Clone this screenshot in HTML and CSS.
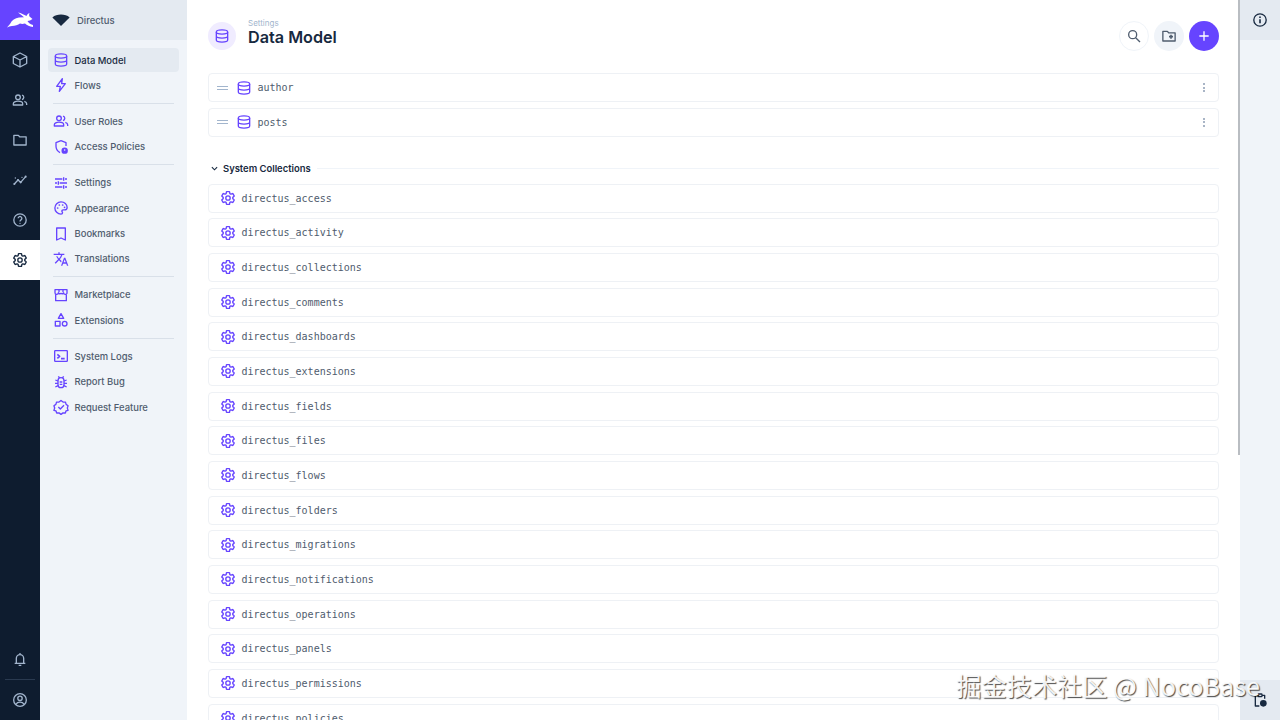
FILE: index.html
```html
<!DOCTYPE html>
<html lang="en">
<head>
    <meta charset="UTF-8">
    <title>Data Model - Directus</title>
    <link rel="stylesheet" href="styles.css">
</head>
<body>
<svg class="sprite" width="0" height="0">
    <symbol id="i-database" viewBox="0 0 24 24"><ellipse cx="12" cy="6" rx="8.500" ry="3.200"/><path d="M3.500 6v12c0 1.800 3.800 3.200 8.500 3.200s8.500-1.400 8.500-3.200V6M3.500 12c0 1.800 3.800 3.200 8.500 3.200s8.500-1.400 8.500-3.200"/></symbol>
    <symbol id="i-bolt" viewBox="0 0 24 24"><path d="M14 2.500 5.500 14H11l-1.500 7.500L18.500 10H13z"/></symbol>
    <symbol id="i-group" viewBox="0 0 24 24"><circle cx="9" cy="8" r="3.500"/><path d="M2 19.500v-1.800c0-2.200 3.200-3.900 7-3.900s7 1.700 7 3.900v1.800zM15 4.600a3.500 3.500 0 0 1 0 6.800M18.500 14.200c2 .6 3.500 1.800 3.500 3.500v1.800"/></symbol>
    <symbol id="i-policy" viewBox="0 0 24 24"><path d="M12 2.500 19.500 5.500v5M10.500 20.500c-3.200-1.700-6-5-6-9.500V5.500L12 2.500"/><circle class="fill" cx="17.500" cy="17.500" r="4.800"/><circle class="hole" cx="17.500" cy="16.500" r="1.200"/></symbol>
    <symbol id="i-tune" viewBox="0 0 24 24"><path d="M3 6h11M18 6h3M16 3.500v5M3 12h3M10 12h11M8 9.500v5M3 18h11M18 18h3M16 15.500v5"/></symbol>
    <symbol id="i-palette" viewBox="0 0 24 24"><path d="M12 2.800a9.200 9.200 0 0 0 0 18.400c1.500 0 2.300-1 2.300-2 0-1.500-1.100-1.600-1.100-2.700 0-1 .8-1.600 2-1.600h2.300a3.700 3.700 0 0 0 3.700-3.700c0-4.900-4.100-8.400-9.200-8.400z"/><circle class="fill" cx="7" cy="12" r="1.300"/><circle class="fill" cx="9.500" cy="7.500" r="1.300"/><circle class="fill" cx="14.500" cy="7.500" r="1.300"/><circle class="fill" cx="17.300" cy="11" r="1.300"/></symbol>
    <symbol id="i-bookmark" viewBox="0 0 24 24"><path d="M5.500 3h13v18L12 18l-6.500 3z"/></symbol>
    <symbol id="i-translate" viewBox="0 0 24 24"><path class="fill" d="M12.870 15.070l-2.540-2.510.03-.03c1.740-1.940 2.980-4.170 3.710-6.530H17V4h-7V2H8v2H1v1.990h11.170C11.500 7.920 10.440 9.750 9 11.350 8.070 10.320 7.300 9.190 6.690 8h-2c.73 1.630 1.730 3.170 2.980 4.560l-5.090 5.020L4 19l5-5 3.110 3.110.76-2.040zM18.500 10h-2L12 22h2l1.120-3h4.750L21 22h2l-4.500-12zm-2.620 7l1.620-4.330L19.120 17h-3.240z"/></symbol>
    <symbol id="i-store" viewBox="0 0 24 24"><path d="M3 4h18v4.500a2.500 2.500 0 0 1-5 .2 2.500 2.500 0 0 1-4 .8 2.500 2.500 0 0 1-4-.8 2.500 2.500 0 0 1-5-.2zM4 11.500V20.500h16v-9M9 4v4M15 4v4"/></symbol>
    <symbol id="i-category" viewBox="0 0 24 24"><path d="M12 2.500 16 9.500H8z"/><rect x="3.500" y="14" width="7" height="7"/><circle cx="17.500" cy="17.500" r="3.500"/></symbol>
    <symbol id="i-terminal" viewBox="0 0 24 24"><rect x="2.500" y="4" width="19" height="16" rx="1"/><path class="bold" d="M6.500 9.500 10 12.500l-3.500 3M12 16h5.500"/></symbol>
    <symbol id="i-bug" viewBox="0 0 24 24"><rect x="7.500" y="5.500" width="9" height="15" rx="4.500"/><path d="M10 12h4M10 15.500h4M8 3.500l2 2.500M16 3.500l-2 2.500M3.500 9l4 1.500M20.500 9l-4 1.500M3 14h4.500M21 14h-4.500M3.500 19.500l4-2M20.500 19.500l-4-2"/></symbol>
    <symbol id="i-verified" viewBox="0 0 24 24"><path d="M12 2.300l3 2.200 3.600.1 1.100 3.500 2.900 2.100-1.100 3.400 1.100 3.500-3 .6-1.100 3.300-3.500-.2-3 2.300-3-2.300-3.500.2-1.100-3.300-3-.6 1.100-3.500-1.100-3.400 2.900-2.100 1.100-3.500 3.600-.1z"/><path d="M8 12l3 3 5.500-5.500"/></symbol>
    <symbol id="i-cube" viewBox="0 0 24 24"><path d="M12 1.500 22 6.800v10.400L12 22.500 2 17.200V6.800zM2 6.800 12 12l10-5.200M12 12v10.500"/></symbol>
    <symbol id="i-folder" viewBox="0 0 24 24"><path d="M2.800 5h6.700l2 2.200h9.700V19.500H2.800z"/></symbol>
    <symbol id="i-insights" viewBox="0 0 24 24"><path d="M3.500 18 9 12l4 3.500L20.500 7"/><circle class="fill" cx="3.500" cy="18" r="1.600"/><circle class="fill" cx="9" cy="12" r="1.600"/><circle class="fill" cx="13" cy="15.500" r="1.600"/><circle class="fill" cx="20.500" cy="7" r="1.600"/><circle class="fill" cx="15" cy="8" r="1"/><circle class="fill" cx="5" cy="9" r="1"/></symbol>
    <symbol id="i-help" viewBox="0 0 24 24"><circle cx="12" cy="12" r="9.300"/><path d="M9.200 9.500a2.800 2.800 0 1 1 4.300 2.400c-1 .6-1.500 1.200-1.500 2.300"/><circle class="fill" cx="12" cy="17" r="1"/></symbol>
    <symbol id="i-gear" viewBox="0 0 24 24"><path d="M19.140 12.940c.04-.3.06-.61.06-.94 0-.32-.02-.64-.07-.94l2.030-1.580c.18-.14.23-.41.12-.61l-1.920-3.320c-.12-.22-.37-.29-.59-.22l-2.390.96c-.5-.38-1.030-.7-1.620-.94l-.36-2.540c-.04-.24-.24-.41-.48-.41h-3.840c-.24 0-.43.17-.47.41l-.36 2.540c-.59.24-1.130.57-1.620.94l-2.390-.96c-.22-.08-.47 0-.59.22L2.740 8.870c-.12.21-.08.47.12.61l2.030 1.580c-.05.3-.09.63-.09.94s.02.64.07.94l-2.030 1.580c-.18.14-.23.41-.12.61l1.920 3.320c.12.22.37.29.59.22l2.390-.96c.5.38 1.030.7 1.620.94l.36 2.540c.05.24.24.41.48.41h3.840c.24 0 .44-.17.47-.41l.36-2.540c.59-.24 1.130-.56 1.620-.94l2.390.96c.22.08.47 0 .59-.22l1.920-3.320c.12-.22.07-.47-.12-.61l-2.010-1.580z"/><circle cx="12" cy="12" r="3.300"/></symbol>
    <symbol id="i-bell" viewBox="0 0 24 24"><path d="M6.500 18v-7a5.500 5.500 0 0 1 11 0v7M4 18.500h16M10 21.500h4M12 3v2.500"/></symbol>
    <symbol id="i-account" viewBox="0 0 24 24"><circle cx="12" cy="12" r="9.500"/><circle cx="12" cy="9.500" r="3.300"/><path d="M5.800 18.500c1.400-2.200 3.600-3.200 6.200-3.200s4.800 1 6.200 3.200"/></symbol>
    <symbol id="i-search" viewBox="0 0 24 24"><circle cx="10" cy="10" r="6"/><path d="M14.500 14.500 21 21"/></symbol>
    <symbol id="i-newfolder" viewBox="0 0 24 24"><path d="M2.800 5h6.700l2 2.200h9.700V19.500H2.800z"/><path class="bold" d="M15 10v6M12 13h6"/></symbol>
    <symbol id="i-plus" viewBox="0 0 24 24"><path d="M12 5v14M5 12h14"/></symbol>
    <symbol id="i-info" viewBox="0 0 24 24"><circle cx="12" cy="12" r="9.300"/><path class="bold" d="M12 11v6"/><circle class="fill" cx="12" cy="7.800" r="1.300"/></symbol>
    <symbol id="i-pending" viewBox="0 0 24 24"><path d="M19 10V5h-4M9 5H5v16h6"/><rect x="9" y="3" width="6" height="4" rx="1"/><circle class="fill" cx="17" cy="17" r="5"/></symbol>
</svg>

<nav class="module-bar">
    <a class="logo" href="#">
        <svg viewBox="0 0 40 40" width="40" height="40"><path fill="#fff" d="M7 27.500 10 24C12 20 15 18 19 17.500L24 17.200C22 15.500 20 14 18 12.500 21 13 24 14.500 26.500 16 27 14.500 28 13.500 29.500 13 29 14.500 29 15.500 29.500 16.500L32.500 19 30 20.500 27.500 21C28 22.500 30 24 33 25L33 27C29.500 26.500 27 25.500 25 23.500 23 24 21.500 24 20 23.500 18 25 15 26 12 26 10 26.200 8.500 26.800 7 27.500Z"/></svg>
    </a>
    <a class="module" href="#"><svg class="icon"><use href="#i-cube"/></svg></a>
    <a class="module" href="#"><svg class="icon"><use href="#i-group"/></svg></a>
    <a class="module" href="#"><svg class="icon"><use href="#i-folder"/></svg></a>
    <a class="module" href="#"><svg class="icon"><use href="#i-insights"/></svg></a>
    <a class="module" href="#"><svg class="icon"><use href="#i-help"/></svg></a>
    <a class="module active" href="#"><svg class="icon"><use href="#i-gear"/></svg></a>
    <div class="module-bottom">
        <a class="module" href="#"><svg class="icon"><use href="#i-bell"/></svg></a>
        <div class="module-line"></div>
        <a class="module" href="#"><svg class="icon"><use href="#i-account"/></svg></a>
    </div>
</nav>

<aside class="sidebar">
    <div class="project">
        <svg viewBox="0 0 24 24" width="18" height="18"><path fill="#172940" d="M.5 8.500C3.500 5.500 7.500 4.500 12 4.500s8.500 1 11.500 4L12 20z"/></svg>
        <span>Directus</span>
    </div>
    <div class="side-nav">
        <div class="side-group">
            <a class="side-item current" href="#"><svg class="icon"><use href="#i-database"/></svg>Data Model</a>
            <a class="side-item" href="#"><svg class="icon"><use href="#i-bolt"/></svg>Flows</a>
        </div>
        <hr>
        <div class="side-group">
            <a class="side-item" href="#"><svg class="icon"><use href="#i-group"/></svg>User Roles</a>
            <a class="side-item" href="#"><svg class="icon"><use href="#i-policy"/></svg>Access Policies</a>
        </div>
        <hr>
        <div class="side-group">
            <a class="side-item" href="#"><svg class="icon"><use href="#i-tune"/></svg>Settings</a>
            <a class="side-item" href="#"><svg class="icon"><use href="#i-palette"/></svg>Appearance</a>
            <a class="side-item" href="#"><svg class="icon"><use href="#i-bookmark"/></svg>Bookmarks</a>
            <a class="side-item" href="#"><svg class="icon"><use href="#i-translate"/></svg>Translations</a>
        </div>
        <hr>
        <div class="side-group">
            <a class="side-item" href="#"><svg class="icon"><use href="#i-store"/></svg>Marketplace</a>
            <a class="side-item" href="#"><svg class="icon"><use href="#i-category"/></svg>Extensions</a>
        </div>
        <hr>
        <div class="side-group">
            <a class="side-item" href="#"><svg class="icon"><use href="#i-terminal"/></svg>System Logs</a>
            <a class="side-item" href="#"><svg class="icon"><use href="#i-bug"/></svg>Report Bug</a>
            <a class="side-item" href="#"><svg class="icon"><use href="#i-verified"/></svg>Request Feature</a>
        </div>
    </div>
</aside>

<main class="main">
    <header class="header">
        <div class="title-icon"><svg class="icon"><use href="#i-database"/></svg></div>
        <div class="title-text">
            <small>Settings</small>
            <h1>Data Model</h1>
        </div>
        <div class="actions">
            <button class="round outline"><svg class="icon"><use href="#i-search"/></svg></button>
            <button class="round soft"><svg class="icon"><use href="#i-newfolder"/></svg></button>
            <button class="round primary"><svg class="icon"><use href="#i-plus"/></svg></button>
        </div>
    </header>

    <div class="rows">
        <div class="row user">
            <span class="handle"></span>
            <svg class="icon"><use href="#i-database"/></svg>
            <span class="name">author</span>
            <span class="more"><i></i><i></i><i></i></span>
        </div>
        <div class="row user">
            <span class="handle"></span>
            <svg class="icon"><use href="#i-database"/></svg>
            <span class="name">posts</span>
            <span class="more"><i></i><i></i><i></i></span>
        </div>
    </div>

    <div class="divider-label">
        <svg class="chevron" viewBox="0 0 24 24"><path d="M5 8.500 12 15.500 19 8.500"/></svg>
        <span>System Collections</span>
        <div class="divider-line"></div>
    </div>

    <div class="rows">
        <div class="row"><svg class="icon"><use href="#i-gear"/></svg><span class="name">directus_access</span></div>
        <div class="row"><svg class="icon"><use href="#i-gear"/></svg><span class="name">directus_activity</span></div>
        <div class="row"><svg class="icon"><use href="#i-gear"/></svg><span class="name">directus_collections</span></div>
        <div class="row"><svg class="icon"><use href="#i-gear"/></svg><span class="name">directus_comments</span></div>
        <div class="row"><svg class="icon"><use href="#i-gear"/></svg><span class="name">directus_dashboards</span></div>
        <div class="row"><svg class="icon"><use href="#i-gear"/></svg><span class="name">directus_extensions</span></div>
        <div class="row"><svg class="icon"><use href="#i-gear"/></svg><span class="name">directus_fields</span></div>
        <div class="row"><svg class="icon"><use href="#i-gear"/></svg><span class="name">directus_files</span></div>
        <div class="row"><svg class="icon"><use href="#i-gear"/></svg><span class="name">directus_flows</span></div>
        <div class="row"><svg class="icon"><use href="#i-gear"/></svg><span class="name">directus_folders</span></div>
        <div class="row"><svg class="icon"><use href="#i-gear"/></svg><span class="name">directus_migrations</span></div>
        <div class="row"><svg class="icon"><use href="#i-gear"/></svg><span class="name">directus_notifications</span></div>
        <div class="row"><svg class="icon"><use href="#i-gear"/></svg><span class="name">directus_operations</span></div>
        <div class="row"><svg class="icon"><use href="#i-gear"/></svg><span class="name">directus_panels</span></div>
        <div class="row"><svg class="icon"><use href="#i-gear"/></svg><span class="name">directus_permissions</span></div>
        <div class="row"><svg class="icon"><use href="#i-gear"/></svg><span class="name">directus_policies</span></div>
    </div>
    <div class="scroll-thumb"></div>
</main>

<aside class="info-bar">
    <div class="info-top"><svg class="icon"><use href="#i-info"/></svg></div>
    <div class="info-bottom"><svg class="icon"><use href="#i-pending"/></svg></div>
</aside>

<div class="watermark">掘金技术社区 @ NocoBase</div>
</body>
</html>
```

FILE: styles.css
```css
:root {
    --primary-color: #6644ff;
    --nav-color: #0e1c2f;
    --side-color: #f0f4f9;
    --side-dark: #e4eaf1;
    --border-color: #eef1f5;
    --text-color: #172940;
    --text-soft: #4f5c6e;
}

* {
    box-sizing: border-box;
}

html, body {
    height: 100%;
}

body {
    margin: 0;
    display: flex;
    overflow: hidden;
    font-family: 'Inter', sans-serif;
    font-size: 9.44px;
    color: var(--text-color);
    background-color: #fff;
}

a {
    color: inherit;
    text-decoration: none;
}

.sprite {
    position: absolute;
}

.icon {
    display: block;
    flex: none;
    width: 16px;
    height: 16px;
    fill: none;
    stroke: currentColor;
    stroke-width: 2;
    stroke-linejoin: round;
}

.fill {
    fill: currentColor;
    stroke: none;
}

.hole {
    fill: #f0f4f9;
    stroke: none;
}

.bold {
    stroke-width: 2.4;
}

/* left module bar */
.module-bar {
    flex: 0 0 40px;
    display: flex;
    flex-direction: column;
    background-color: var(--nav-color);
    color: #a2b5cd;
}

.logo {
    display: block;
    height: 40px;
    background-color: var(--primary-color);
}

.logo svg {
    display: block;
}

.module {
    display: flex;
    align-items: center;
    justify-content: center;
    flex: 0 0 40px;
    height: 40px;
}

.module.active {
    background-color: #fff;
    color: var(--text-color);
}

.module-bottom {
    margin-top: auto;
    display: flex;
    flex-direction: column;
}

.module-line {
    height: 1px;
    margin: 0 5px;
    background-color: #2a3a50;
}

/* settings sidebar */
.sidebar {
    flex: 0 0 147px;
    background-color: var(--side-color);
}

.project {
    display: flex;
    align-items: center;
    gap: 7px;
    height: 40px;
    padding-left: 12px;
    background-color: var(--side-dark);
    font-weight: 500;
    color: var(--text-soft);
}

.side-nav {
    padding: 8px;
}

.side-group {
    display: flex;
    flex-direction: column;
    gap: 1.4px;
}

.side-item {
    display: flex;
    align-items: center;
    gap: 5.5px;
    height: 24px;
    padding-left: 5px;
    border-radius: 4px;
    font-weight: 500;
    color: var(--text-soft);
}

.side-item .icon {
    color: var(--primary-color);
}

.side-item.current {
    background-color: var(--side-dark);
    color: var(--text-color);
}

.side-nav hr {
    height: 1px;
    margin: 5.5px 5px;
    border: none;
    background-color: #d9e0e9;
}

/* main content */
.main {
    position: relative;
    flex: 1;
    min-width: 0;
    padding: 0 21px;
    overflow: hidden;
    background-color: #fff;
}

.header {
    display: flex;
    align-items: center;
    height: 73px;
    padding-bottom: 1px;
}

.title-icon {
    display: flex;
    align-items: center;
    justify-content: center;
    width: 28px;
    height: 28px;
    border-radius: 50%;
    background-color: #f0ecff;
    color: var(--primary-color);
}

.title-text {
    margin-left: 12px;
    padding-bottom: 9px;
}

.title-text small {
    display: block;
    font-size: 8px;
    line-height: 10px;
    color: #a2b5cd;
}

.title-text h1 {
    margin: 0;
    font-size: 16.2px;
    line-height: 18px;
    font-weight: 600;
}

.actions {
    display: flex;
    gap: 5px;
    margin-left: auto;
}

.round {
    display: flex;
    align-items: center;
    justify-content: center;
    width: 30px;
    height: 30px;
    padding: 0;
    border: 1.5px solid transparent;
    border-radius: 50%;
    background: none;
    color: var(--text-soft);
}

.round.outline {
    border-color: var(--side-color);
}

.round.soft {
    background-color: var(--side-color);
}

.round.primary {
    background-color: var(--primary-color);
    color: #fff;
}

.rows {
    display: flex;
    flex-direction: column;
    gap: 5.67px;
}

.row {
    display: flex;
    align-items: center;
    flex: 0 0 29px;
    width: 1011px;
    height: 29px;
    padding-left: 11.4px;
    border: 1.6px solid var(--border-color);
    border-radius: 4px;
    background-color: #fff;
    color: var(--primary-color);
}

.row .name {
    margin-left: 5px;
    font-family: 'DejaVu Sans Mono', 'Liberation Mono', monospace;
    font-size: 10px;
    color: var(--text-soft);
}

.row.user {
    padding-left: 8px;
}

.row.user .icon {
    margin-left: 8.4px;
}

.handle {
    flex: none;
    width: 11px;
    height: 4px;
    border-top: 1.2px solid #a2b5cd;
    border-bottom: 1.2px solid #a2b5cd;
}

.more {
    display: flex;
    flex-direction: column;
    gap: 1.5px;
    margin-left: auto;
    margin-right: 13px;
}

.more i {
    display: block;
    width: 2px;
    height: 2px;
    border-radius: 50%;
    background-color: #8d9db3;
}

.divider-label {
    display: flex;
    align-items: center;
    width: 1011px;
    height: 20px;
    margin-top: 22px;
    margin-bottom: 5px;
    font-weight: 600;
}

.chevron {
    width: 9px;
    height: 9px;
    margin-left: 1.5px;
    margin-right: 4.5px;
    fill: none;
    stroke: currentColor;
    stroke-width: 3;
}

.divider-line {
    flex: 1;
    height: 1.5px;
    margin-left: 6px;
    background-color: var(--side-color);
}

.scroll-thumb {
    position: absolute;
    top: 0;
    right: 0;
    width: 2.5px;
    height: 455px;
    background-color: #b9bdc2;
}

/* right info rail */
.info-bar {
    flex: 0 0 40px;
    display: flex;
    flex-direction: column;
    justify-content: space-between;
    background-color: var(--side-color);
}

.info-top, .info-bottom {
    display: flex;
    align-items: center;
    justify-content: center;
    height: 40px;
    background-color: var(--side-dark);
}

.watermark {
    position: absolute;
    top: 667px;
    right: 20px;
    font-family: 'Noto Sans CJK SC', 'Noto Sans', sans-serif;
    font-size: 25.2px;
    font-weight: 400;
    line-height: 36px;
    white-space: nowrap;
    color: rgba(255, 255, 255, 0.92);
    text-shadow: 1px 1px 1px rgba(0, 0, 0, 0.7);
}
```
